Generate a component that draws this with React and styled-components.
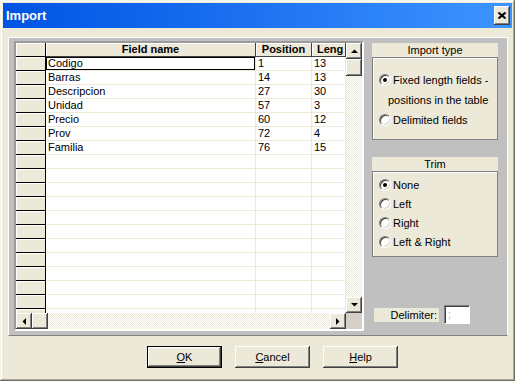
import React from "react";
import styled, { createGlobalStyle } from "styled-components";

const GlobalStyle = createGlobalStyle`
  body {
    margin: 0;
    font-family: "Liberation Sans", Arial, sans-serif;
    font-size: 11px;
    color: #000;
  }
`;

const bevel = `
  box-shadow: inset -1px -1px #404040, inset 1px 1px #fff,
    inset -2px -2px #808080, inset 2px 2px #ece9d8;
`;

const Window = styled.div`
  width: 515px;
  height: 381px;
  box-sizing: border-box;
  padding: 3px;
  background: #ece9d8;
  display: flex;
  flex-direction: column;
  box-shadow: inset -1px -1px #716f64, inset 1px 1px #f4f3ee,
    inset -2px -2px #aca899, inset 2px 2px #fff;
`;

const TitleBar = styled.div`
  height: 25px;
  display: flex;
  align-items: center;
  justify-content: space-between;
  padding: 0 2px 0 3px;
  background: linear-gradient(to right, #0054e3, #1b6ff0 45%, #3d95ff);
`;

const Title = styled.span`
  color: #fff;
  font-weight: bold;
  font-size: 13px;
`;

const CloseButton = styled.div`
  width: 16px;
  height: 19px;
  background: #ece9d8;
  display: flex;
  align-items: center;
  justify-content: center;
  ${bevel}
`;

const Body = styled.div`
  padding: 9px 4px 0 5px;
`;

const Panel = styled.div`
  height: 299px;
  box-sizing: border-box;
  background: #c0c0c0;
  border: 1px solid #fff;
  border-bottom-color: #808080;
  padding: 3px 9px 4px 5px;
  display: flex;
  gap: 8px;
`;

const GridFrame = styled.div`
  width: 350px;
  box-sizing: border-box;
  border: 2px solid;
  border-color: #9a9a9a #fff #fff #9a9a9a;
  display: grid;
  grid-template-columns: 330px 16px;
  grid-template-rows: 270px 16px;
  background: #fff;
`;

const Table = styled.div`
  overflow: hidden;
`;

const Row = styled.div`
  display: grid;
  grid-template-columns: 30px 210px 56px 34px;
  height: 14px;
`;

const RowHead = styled.div`
  box-sizing: border-box;
  background: #ece9d8;
  border-right: 1px solid #000;
  border-bottom: 1px solid #000;
  box-shadow: inset 1px 1px #fff;
`;

const HeadCell = styled.div`
  box-sizing: border-box;
  background: #ece9d8;
  border-right: 1px solid #404040;
  border-bottom: 1px solid #404040;
  box-shadow: inset 1px 1px #fff;
  font-weight: bold;
  line-height: 13px;
  text-align: ${(p) => p.$align || "center"};
  padding-left: ${(p) => (p.$align === "left" ? "5px" : "0")};
  white-space: nowrap;
  overflow: hidden;
`;

const Cell = styled.div`
  box-sizing: border-box;
  border-right: 1px solid #ece9d8;
  border-bottom: 1px solid #ece9d8;
  padding-left: 2px;
  line-height: 13px;
  white-space: nowrap;
  overflow: hidden;
  box-shadow: ${(p) => (p.$focus ? "inset 0 0 0 1px #000" : "none")};
`;

const checker = `
  background: repeating-conic-gradient(#ece9d8 0 25%, #fff 0 50%) 0 0 / 2px 2px;
`;

const VScroll = styled.div`
  display: flex;
  flex-direction: column;
  ${checker}
`;

const HScroll = styled.div`
  display: flex;
  ${checker}
`;

const ScrollButton = styled.div`
  width: 16px;
  height: 16px;
  flex: none;
  background: #ece9d8;
  display: flex;
  align-items: center;
  justify-content: center;
  ${bevel}
`;

const Thumb = styled(ScrollButton)`
  height: ${(p) => (p.$vertical ? "17px" : "16px")};
`;

const Track = styled.div`
  flex: 1;
`;

const Corner = styled.div`
  background: #d4d0c8;
`;

const Side = styled.div`
  width: 126px;
  display: flex;
  flex-direction: column;
  padding-top: 2px;
`;

const GroupTitle = styled.div`
  height: 14px;
  line-height: 14px;
  background: #ece9d8;
  text-align: center;
  margin-top: ${(p) => p.$top || 0}px;
`;

const GroupBox = styled.div`
  box-sizing: border-box;
  background: #ece9d8;
  border: 1px solid #808080;
  box-shadow: inset 1px 1px #fff;
  padding: ${(p) => p.$pad};
  display: flex;
  flex-direction: column;
`;

const RadioRow = styled.div`
  display: flex;
  align-items: center;
  height: ${(p) => p.$h}px;
  padding-left: 6px;
`;

const Radio = styled.span`
  width: 12px;
  height: 12px;
  flex: none;
  box-sizing: border-box;
  border-radius: 50%;
  background: #fff;
  border: 1px solid;
  border-color: #808080 #fff #fff #808080;
  box-shadow: inset 1px 1px #404040, inset -1px -1px #d4d0c8;
  display: flex;
  align-items: center;
  justify-content: center;
  &::after {
    content: "";
    width: 4px;
    height: 4px;
    border-radius: 50%;
    background: ${(p) => (p.$checked ? "#000" : "transparent")};
  }
`;

const RadioLabel = styled.span`
  margin-left: 2px;
  white-space: nowrap;
`;

const WrapLine = styled.div`
  height: 20px;
  line-height: 20px;
  padding-left: 15px;
`;

const DelimiterRow = styled.div`
  margin-top: auto;
  margin-bottom: 7px;
  margin-left: 2px;
  display: flex;
  align-items: center;
  gap: 5px;
`;

const DelimiterLabel = styled.div`
  width: 65px;
  height: 14px;
  line-height: 14px;
  background: #ece9d8;
  text-align: right;
  padding-right: 2px;
  box-sizing: border-box;
`;

const DelimiterInput = styled.div`
  width: 26px;
  height: 19px;
  box-sizing: border-box;
  background: #fff;
  border: 1px solid;
  border-color: #808080 #fff #fff #808080;
  box-shadow: inset 1px 1px #404040;
  color: #b0b0b0;
  padding-left: 3px;
  line-height: 16px;
`;

const ButtonRow = styled.div`
  display: flex;
  gap: 13px;
  padding-left: 139px;
  margin-top: 10px;
`;

const Button = styled.div`
  width: 75px;
  height: 22px;
  box-sizing: border-box;
  background: #ece9d8;
  display: flex;
  align-items: center;
  justify-content: center;
  ${(p) =>
    p.$default
      ? `border: 1px solid #000;
         box-shadow: inset -1px -1px #404040, inset 1px 1px #fff,
           inset -2px -2px #808080;`
      : `box-shadow: inset -1px -1px #404040, inset 1px 1px #fff,
           inset -2px -2px #808080, inset 2px 2px #ece9d8;`}
`;

const Arrow = ({ dir }) => {
  const pts = {
    up: "0,4 7,4 3.5,0.5",
    down: "0,0 7,0 3.5,3.5",
    left: "4,0 4,7 0.5,3.5",
    right: "0,0 0,7 3.5,3.5",
  }[dir];
  const vertical = dir === "up" || dir === "down";
  return (
    <svg width={vertical ? 7 : 4} height={vertical ? 4 : 7}>
      <polygon points={pts} fill="#000" />
    </svg>
  );
};

const fields = [
  ["Codigo", 1, 13],
  ["Barras", 14, 13],
  ["Descripcion", 27, 30],
  ["Unidad", 57, 3],
  ["Precio", 60, 12],
  ["Prov", 72, 4],
  ["Familia", 76, 15],
];

const rows = Array.from({ length: 19 }, (_, i) => fields[i] || ["", "", ""]);

export default function App() {
  return (
    <>
      <GlobalStyle />
      <Window>
        <TitleBar>
          <Title>Import</Title>
          <CloseButton>
            <svg width="8" height="7" viewBox="0 0 8 7">
              <path d="M0.5 0.5 L7.5 6.5 M7.5 0.5 L0.5 6.5" stroke="#000" strokeWidth="2" />
            </svg>
          </CloseButton>
        </TitleBar>
        <Body>
          <Panel>
            <GridFrame>
              <Table>
                <Row>
                  <RowHead />
                  <HeadCell>Field name</HeadCell>
                  <HeadCell>Position</HeadCell>
                  <HeadCell $align="left">Leng</HeadCell>
                </Row>
                {rows.map(([name, pos, len], i) => (
                  <Row key={i}>
                    <RowHead />
                    <Cell $focus={i === 0}>{name}</Cell>
                    <Cell>{pos}</Cell>
                    <Cell>{len}</Cell>
                  </Row>
                ))}
              </Table>
              <VScroll>
                <ScrollButton>
                  <Arrow dir="up" />
                </ScrollButton>
                <Thumb $vertical />
                <Track />
                <ScrollButton>
                  <Arrow dir="down" />
                </ScrollButton>
              </VScroll>
              <HScroll>
                <ScrollButton>
                  <Arrow dir="left" />
                </ScrollButton>
                <Thumb />
                <Track />
                <ScrollButton>
                  <Arrow dir="right" />
                </ScrollButton>
              </HScroll>
              <Corner />
            </GridFrame>
            <Side>
              <GroupTitle>Import type</GroupTitle>
              <GroupBox $pad="12px 0 9px">
                <RadioRow $h={20}>
                  <Radio $checked />
                  <RadioLabel>Fixed length fields -</RadioLabel>
                </RadioRow>
                <WrapLine>positions in the table</WrapLine>
                <RadioRow $h={20}>
                  <Radio />
                  <RadioLabel>Delimited fields</RadioLabel>
                </RadioRow>
              </GroupBox>
              <GroupTitle $top={17}>Trim</GroupTitle>
              <GroupBox $pad="3px 0 5px">
                {["None", "Left", "Right", "Left & Right"].map((t, i) => (
                  <RadioRow key={t} $h={19}>
                    <Radio $checked={i === 0} />
                    <RadioLabel>{t}</RadioLabel>
                  </RadioRow>
                ))}
              </GroupBox>
              <DelimiterRow>
                <DelimiterLabel>Delimiter:</DelimiterLabel>
                <DelimiterInput>;</DelimiterInput>
              </DelimiterRow>
            </Side>
          </Panel>
          <ButtonRow>
            <Button $default>
              <u>O</u>K
            </Button>
            <Button>
              <u>C</u>ancel
            </Button>
            <Button>
              <u>H</u>elp
            </Button>
          </ButtonRow>
        </Body>
      </Window>
    </>
  );
}
